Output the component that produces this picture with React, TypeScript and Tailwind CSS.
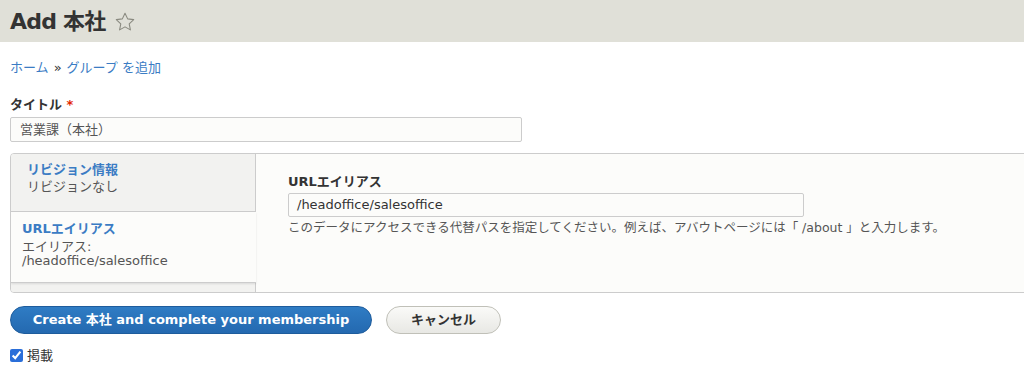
import React from "react";

const font = { fontFamily: '"DejaVu Sans", "Noto Sans CJK JP", sans-serif' };

export default function App() {
  return (
    <div className="w-[1024px] h-[375px] overflow-hidden bg-white text-[#333]" style={font}>
      {/* header */}
      <div className="h-[42px] bg-[#e0e0d8] flex items-center px-[10px] gap-[9px]">
        <h1 className="text-[22px] font-bold text-[#333] tracking-[-0.8px]">Add 本社</h1>
        <svg width="22" height="22" viewBox="0 0 24 24" className="mt-[1px]">
          <path
            d="M12 2.5l2.9 6.1 6.6.8-4.9 4.6 1.3 6.6L12 17.3l-5.9 3.3 1.3-6.6-4.9-4.6 6.6-.8z"
            fill="none"
            stroke="#8a8a80"
            strokeWidth="1.2"
            strokeLinejoin="round"
          />
        </svg>
      </div>

      <div className="px-[10px]">
        {/* breadcrumb */}
        <div className="mt-[17px] text-[13px] text-[#3b7cc4] leading-[18px]">
          <span>ホーム</span>
          <span className="text-[#333] mx-[5px]">»</span>
          <span>グループ を追加</span>
        </div>

        {/* title field */}
        <div className="mt-[20px]">
          <label className="block text-[13px] font-bold leading-[16px]">
            タイトル <span className="text-[#e32700]">*</span>
          </label>
          <div className="mt-[4px] w-[512px] h-[25px] border border-[#ccc] rounded-[2px] bg-[#fcfcfa] flex items-center px-[9px] text-[13px] text-[#555]">
            営業課（本社）
          </div>
        </div>

        {/* vertical tabs */}
        <div className="mt-[11px] flex h-[140px] w-[1030px] border border-[#ccc] rounded-l-[4px] bg-[#fcfcfa] overflow-hidden">
          <div className="w-[245px] shrink-0 flex flex-col bg-[#f2f2f0] border-r border-[#ccc]">
            <div className="h-[58px] border-b border-[#ccc] px-[16px] pt-[7px] text-[13px] leading-[17px]">
              <div className="font-bold text-[#3b7cc4]">リビジョン情報</div>
              <div className="text-[#555]">リビジョンなし</div>
            </div>
            <div className="h-[71px] bg-[#fcfcfa] border-b border-[#ccc] shadow-[0_1px_2px_rgba(0,0,0,0.1)] px-[11px] pt-[8px] text-[13px] leading-[14px] -mr-[1px]">
              <div className="font-bold text-[#3b7cc4] leading-[18px]">URLエイリアス</div>
              <div className="text-[#555] mt-[2px]">エイリアス:</div>
              <div className="text-[#555]">/headoffice/salesoffice</div>
            </div>
          </div>
          <div className="flex-1 pl-[32px] pt-[20px]">
            <label className="block text-[13px] font-bold leading-[16px] text-[#333]">URLエイリアス</label>
            <div className="mt-[3px] w-[516px] h-[24px] border border-[#ccc] rounded-[2px] bg-[#fcfcfa] flex items-center px-[8px] text-[13px] text-[#333]">
              /headoffice/salesoffice
            </div>
            <div className="mt-[3px] text-[12.5px] text-[#555] leading-[16px]">
              このデータにアクセスできる代替パスを指定してください。例えば、アバウトページには「 /about 」と入力します。
            </div>
          </div>
        </div>

        {/* buttons */}
        <div className="mt-[13px] flex items-center gap-[14px]">
          <button className="h-[28px] w-[362px] rounded-full bg-gradient-to-b from-[#2f7cc4] to-[#2469b0] border border-[#1e5c9c] text-white font-bold text-[13px]">
            Create 本社 and complete your membership
          </button>
          <button className="h-[28px] w-[115px] rounded-full bg-gradient-to-b from-[#fafaf8] to-[#e8e8e4] border border-[#c0c0b8] text-[#333] font-bold text-[13px]">
            キャンセル
          </button>
        </div>

        {/* checkbox */}
        <div className="mt-[12px] flex items-center gap-[4px] text-[13px] text-[#333]">
          <input type="checkbox" defaultChecked className="w-[13px] h-[13px] m-0 accent-[#2a6ed9]" />
          <span>掲載</span>
        </div>
      </div>
    </div>
  );
}
